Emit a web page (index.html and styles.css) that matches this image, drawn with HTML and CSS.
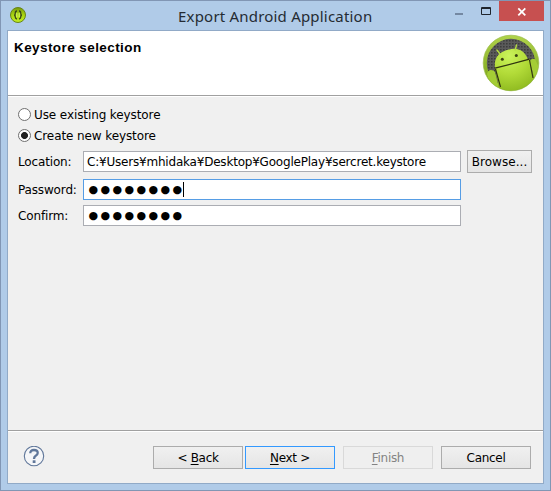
FILE: index.html
```
<!DOCTYPE html>
<html lang="en">
<head>
<meta charset="utf-8">
<title>Export Android Application</title>
<link rel="stylesheet" href="styles.css">
</head>
<body>
<div class="window">
  <header class="titlebar">
    <svg class="app-icon" width="16" height="16" viewBox="0 0 16 16">
      <defs><linearGradient id="badge" x2="0" y2="1"><stop stop-color="#789b0c"/><stop offset=".5" stop-color="#a9d411"/><stop offset="1" stop-color="#c3ee24"/></linearGradient></defs>
      <circle cx="8" cy="8" r="7.5" fill="url(#badge)" stroke="#678519"/>
      <path d="M7 4Q5.3 4 5.3 6T4.2 8Q5.3 8.3 5.3 10T7 12M9 4Q10.7 4 10.7 6T11.8 8Q10.7 8.3 10.7 10T9 12" fill="none" stroke="#39451c" stroke-width="1.3"/>
      <path d="M6.8 6v4M9.2 6v4" stroke="#e4ff78" stroke-width=".8"/>
    </svg>
    <h1 class="title">Export Android Application</h1>
    <div class="controls">
      <svg width="55" height="20" viewBox="0 0 55 20"><path d="M11 12h8v2h-8z" fill="#7488a2"/><path d="M37.5 6.5h9v7h-9z" fill="none" stroke="#1f252d"/><path d="M37 7.5h10" stroke="#1f252d"/></svg>
      <div class="close"><svg width="45" height="20" viewBox="0 0 45 20"><path d="M19.3 7.3l7 7M26.3 7.3l-7 7" stroke="#fff" stroke-width="1.8"/></svg></div>
    </div>
  </header>
  <main class="client">
    <section class="banner">
      <h2 class="heading">Keystore selection</h2>
      <svg class="android" width="58" height="58" viewBox="0 0 58 58">
        <defs>
          <linearGradient id="rim" x2="0" y2="1"><stop stop-color="#b0d34b"/><stop offset="1" stop-color="#739d12"/></linearGradient>
          <radialGradient id="bot" gradientUnits="userSpaceOnUse" cx="27" cy="22" r="36"><stop stop-color="#caf35b"/><stop offset=".5" stop-color="#b2db38"/><stop offset="1" stop-color="#8fba20"/></radialGradient>
          <pattern id="mesh" width="3" height="3" patternUnits="userSpaceOnUse"><path d="M0 0h3v3H0z" fill="#5a5a5a"/><path d="M0 0h1.6v1.6H0z" fill="#3c3c3c"/></pattern>
          <clipPath id="disc"><circle cx="29" cy="29" r="27.5"/></clipPath>
        </defs>
        <circle cx="29" cy="29" r="27.8" fill="url(#rim)" stroke="#9bbb4b" stroke-width=".7"/>
        <circle cx="29" cy="29" r="24.2" fill="url(#mesh)"/>
        <g clip-path="url(#disc)">
          <path d="M13 34C11.500 23 18 17.500 27 15.500 36 13 43 17 46 25.500Z" fill="url(#bot)"/>
          <path d="M13 34L47.500 25 52 45 44 58H18Z" fill="url(#bot)"/>
          <path d="M5 40Q6 36 9 36 12 36 13 38L17.500 56 8 51ZM48 29Q47 26 50 25 53 24 54 27L58 36 53 46Z" fill="#a4cd35"/>
          <path d="M13 34.200L47.500 25.200M13.500 35L18.500 53M47.500 26L51 44" fill="none" stroke="#30350f" stroke-width="1.2"/>
        </g>
        <path d="M15 16l3 4M34.500 11l-1.300 5" stroke="#b5dd43" stroke-width="1.400" stroke-linecap="round"/>
        <circle cx="20.300" cy="25.200" r="1.500" fill="#3b4312"/><circle cx="34.300" cy="21.500" r="1.500" fill="#3b4312"/>
      </svg>
    </section>
    <section class="form">
      <div class="radio"><i class="dot"></i><span>Use existing keystore</span></div>
      <div class="radio"><i class="dot on"></i><span>Create new keystore</span></div>
      <div class="row location"><label>Location:</label><div class="field"><span class="path">C:¥Users¥mhidaka¥Desktop¥GooglePlay¥sercret.keystore</span></div><div class="button browse">Browse...</div></div>
      <div class="row password"><label>Password:</label><div class="field focus"><span class="mask">●●●●●●●●</span><i class="caret"></i></div></div>
      <div class="row confirm"><label>Confirm:</label><div class="field"><span class="mask">●●●●●●●●</span></div></div>
    </section>
    <footer class="footer">
      <svg class="help" width="22" height="22" viewBox="0 0 22 22"><circle cx="11" cy="10" r="9.7" fill="#f5f6f8" stroke="#60779a" stroke-width="1.1"/><path d="M7.3 7.2Q7.2 4 11 4T14.7 7Q14.7 8.6 12.7 9.8 11 10.8 11 13" fill="none" stroke="#60779a" stroke-width="2.3"/><path d="M9.7 14.3h2.8V17H9.7z" fill="#60779a"/></svg>
      <div class="button back"><span>&lt; <u>B</u>ack</span></div>
      <div class="button next"><span><u>N</u>ext &gt;</span></div>
      <div class="button finish"><span><u>F</u>inish</span></div>
      <div class="button cancel"><span>Cancel</span></div>
    </footer>
  </main>
</div>
</body>
</html>
```
FILE: styles.css
```
* { box-sizing: border-box; }
body { margin: 0; font: 12px/16px "DejaVu Sans", sans-serif; letter-spacing: -.1px; color: #000; }
h1, h2 { margin: 0; font-weight: 400; }
svg { display: block; flex: none; }
.window { width: 551px; height: 491px; border: 1px solid #8196b4; background: #b0cbe8; padding: 0 6px; }
.titlebar { height: 29px; display: flex; position: relative; }
.app-icon { margin: 6px 0 0 3px; }
.title { margin: 5px 0 0 152px; font: 15px/20px "Noto Sans", sans-serif; letter-spacing: .2px; color: #252b33; white-space: nowrap; }
.controls { position: absolute; right: 0; top: 0; display: flex; }
.close { background: #c75050; width: 45px; height: 20px; }
.client { width: 537px; height: 454px; border: 1px solid #91aac7; background: #f0f0f0; display: flex; flex-direction: column; }
.banner { height: 65px; background: #fff; border-bottom: 1px solid #a0a0a0; display: flex; justify-content: space-between; padding: 8px 3px 0 6px; }
.heading { font: bold 13.5px/17px "Liberation Sans", sans-serif; letter-spacing: .42px; }
.android { margin-top: -5px; }
.form { height: 334px; border-top: 1px solid #fff; padding: 10px 0 0 10px; }
.radio { display: flex; align-items: center; height: 15px; margin-bottom: 6px; white-space: nowrap; }
.dot { width: 13px; height: 13px; border: 1px solid #707070; border-radius: 50%; background: #fff; margin-right: 3px; flex: none; }
.dot.on { background: radial-gradient(circle, #222 0 3.1px, #fff 3.8px); }
.row { display: flex; align-items: center; }
.row label { width: 65px; flex: none; white-space: nowrap; letter-spacing: -.15px; }
.location { height: 23px; margin-top: 7px; }
.password { height: 21px; margin-top: 6px; }
.confirm { height: 21px; margin-top: 5px; }
.field { width: 378px; height: 21px; border: 1px solid #abadb3; background: #fff; padding-left: 3px; display: flex; align-items: center; white-space: nowrap; }
.path { letter-spacing: -.205px; }
.focus { border-color: #569de5; }
.mask { font-size: 11px; letter-spacing: 2.4px; margin-left: 1.5px; }
.caret { width: 1px; height: 15px; background: #000; margin-left: -1.5px; }
.button { height: 23px; border: 1px solid #acacac; background: linear-gradient(#f0f0f0, #e5e5e5); display: flex; align-items: center; justify-content: center; white-space: nowrap; letter-spacing: -.3px; }
.button u { text-underline-offset: 2px; text-decoration-thickness: 1px; text-decoration-skip-ink: none; }
.browse { width: 65px; margin-left: 6px; letter-spacing: .05px; }
.footer { flex: 1; border-top: 1px solid #a0a0a0; box-shadow: inset 0 1px #fff; display: flex; padding: 15px 0 0 15px; }
.back, .next, .finish, .cancel { width: 90px; }
.back { margin-left: 108px; }
.next { margin-left: 2px; border-color: #3399ff; }
.finish { margin-left: 8px; border-color: #d9d9d9; background: #efefef; color: #838383; }
.cancel { margin-left: 8px; }
```
